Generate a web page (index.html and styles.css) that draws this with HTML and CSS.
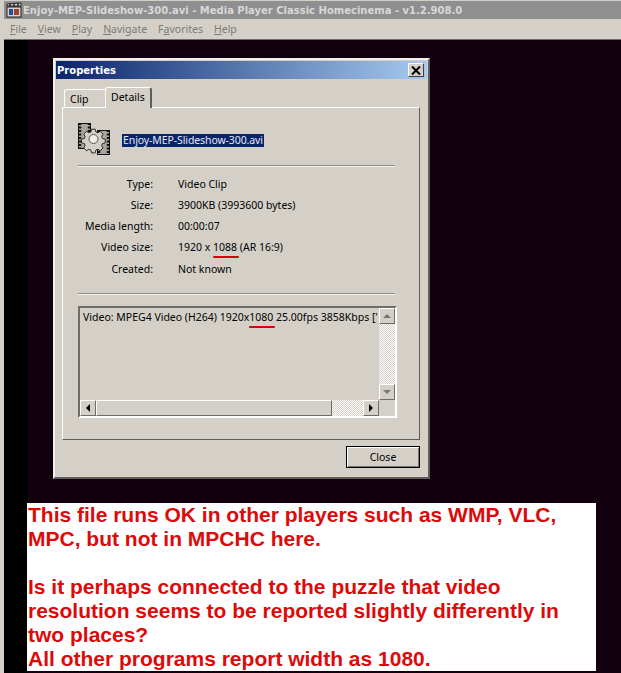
FILE: index.html
```html
<!DOCTYPE html>
<html lang="en">
<head>
    <meta charset="UTF-8">
    <title>Enjoy-MEP-Slideshow-300.avi - Media Player Classic Homecinema</title>
    <link rel="stylesheet" href="styles.css">
</head>
<body>
    <div class="player">
        <div class="titlebar">
            <svg class="app-icon" width="16" height="16" viewBox="0 0 16 16">
                <rect x="1" y="5" width="14" height="10" fill="#d8d4cc" stroke="#222"/>
                <path d="M1 2l14-1v3H1z" fill="#e8e4dc" stroke="#222"/>
                <path d="M4 1.500v3M8 1.500v3M12 1v3" stroke="#222" stroke-width="1.500"/>
                <rect x="3" y="7" width="4" height="6" fill="#2a4a9a"/>
                <rect x="8" y="7" width="5" height="6" fill="#a04030"/>
            </svg>
            <span>Enjoy-MEP-Slideshow-300.avi - Media Player Classic Homecinema - v1.2.908.0</span>
        </div>
        <div class="menubar">
            <span><u>F</u>ile</span>
            <span><u>V</u>iew</span>
            <span><u>P</u>lay</span>
            <span><u>N</u>avigate</span>
            <span>F<u>a</u>vorites</span>
            <span><u>H</u>elp</span>
        </div>
        <div class="video">
            <div class="dialog">
                <div class="dialog-title">
                    <span>Properties</span>
                    <button class="close-x" type="button">
                        <svg width="10" height="9" viewBox="0 0 10 9"><path d="M1 0.500l8 8M9 0.500l-8 8" stroke="#000" stroke-width="2"/></svg>
                    </button>
                </div>
                <div class="tabs">
                    <div class="tab">Clip</div>
                    <div class="tab active">Details</div>
                </div>
                <div class="pane">
                    <div class="file-head">
                        <svg class="file-icon" width="34" height="34" viewBox="0 0 34 34">
                            <g fill="#a9a69f" stroke="#111">
                                <rect x="1.500" y="1.500" width="12" height="25"/>
                                <rect x="20.500" y="8.500" width="12" height="24"/>
                            </g>
                            <path d="M3 1v26M12 1v26M22 8v25M31 8v25" stroke="#111" stroke-width="2.500" stroke-dasharray="2 1.500"/>
                            <path d="M14 3h5l1 4 3 1 3-2 4 4-2 3 1 3 4 1v5l-4 1-1 3 2 3-4 4-3-2-3 1-1 4h-5l-1-4-3-1-3 2-4-4 2-3-1-3-4-1v-5l4-1 1-3-2-3 4-4 3 2 3-1z" transform="translate(4.500 5) scale(.72)" fill="#d4d0c8" stroke="#222" stroke-width="1.300"/>
                            <circle cx="16.500" cy="17" r="4.500" fill="#efede8" stroke="#555"/>
                        </svg>
                        <span class="file-name">Enjoy-MEP-Slideshow-300.avi</span>
                    </div>
                    <div class="groove"></div>
                    <div class="info">
                        <span class="label">Type:</span><span>Video Clip</span>
                        <span class="label">Size:</span><span>3900KB (3993600 bytes)</span>
                        <span class="label">Media length:</span><span>00:00:07</span>
                        <span class="label">Video size:</span><span>1920 x <span class="mark">1088</span> (AR 16:9)</span>
                        <span class="label">Created:</span><span>Not known</span>
                    </div>
                    <div class="groove"></div>
                    <div class="listing">
                        <div class="listing-main">
                            <div class="listing-text">Video: MPEG4 Video (H264) 1920x<span class="mark">1080</span> 25.00fps 3858Kbps ['</div>
                            <div class="hscroll">
                                <div class="sb-btn"><i class="arrow left"></i></div>
                                <div class="sb-thumb"></div>
                                <div class="sb-track"></div>
                                <div class="sb-btn"><i class="arrow right"></i></div>
                            </div>
                        </div>
                        <div class="vscroll">
                            <div class="sb-btn"><i class="arrow up"></i></div>
                            <div class="sb-track"></div>
                            <div class="sb-btn"><i class="arrow down"></i></div>
                        </div>
                    </div>
                </div>
                <div class="dialog-foot">
                    <button class="close-btn" type="button">Close</button>
                </div>
            </div>
            <div class="note">
                <p>This file runs OK in other players such as WMP, VLC,<br>MPC, but not in MPCHC here.</p>
                <p>Is it perhaps connected to the puzzle that video<br>resolution seems to be reported slightly differently in<br>two places?<br>All other programs report width as 1080.</p>
            </div>
        </div>
    </div>
</body>
</html>
```

FILE: styles.css
```css
html, body {
    margin: 0;
    height: 100%;
    overflow: hidden;
}
body {
    font-family: "Noto Sans", sans-serif;
    font-size: 10.500px;
    color: #000;
    background: #d4d0c8;
}
.player {
    height: 673px;
    display: flex;
    flex-direction: column;
    padding: 1px 0 0 4px;
    box-sizing: border-box;
}
.titlebar {
    height: 18px;
    display: flex;
    align-items: center;
    gap: 1px;
    padding-left: 2px;
    background: #8f8f8f;
    color: #d8d8d8;
    font-family: "DejaVu Sans", sans-serif;
    font-weight: bold;
    font-size: 10px;
    white-space: nowrap;
}
.app-icon {
    flex: none;
}
.menubar {
    height: 20px;
    display: flex;
    align-items: center;
    gap: 11px;
    padding-left: 6px;
    color: #7d7b76;
}
.video {
    flex: 1;
    background: linear-gradient(to right, #000 24px, #12000f 24px);
    border-top: 1px solid #6f6e6a;
    padding: 18px 0 0 49px;
}
.dialog {
    width: 364px;
    height: 416px;
    background: #d4d0c8;
    border: 2px solid;
    border-color: #f2f0ec #5e5d59 #5e5d59 #f2f0ec;
    display: flex;
    flex-direction: column;
    padding: 1px 8px 0 1px;
}
.dialog-title {
    height: 18px;
    margin-right: -7px;
    display: flex;
    align-items: center;
    justify-content: space-between;
    padding: 0 3px 0 1px;
    background: linear-gradient(to right, #0a246a, #a6caf0);
    color: #fff;
    font-weight: bold;
    font-size: 10px;
    font-family: "DejaVu Sans", sans-serif;
}
.close-x {
    width: 16px;
    height: 14px;
    padding: 0;
    display: flex;
    align-items: center;
    justify-content: center;
    background: #d4d0c8;
    border: 1px solid;
    border-color: #fff #404040 #404040 #fff;
}
.tabs {
    display: flex;
    align-items: flex-end;
    height: 28px;
    padding-left: 8px;
}
.tab {
    width: 41px;
    height: 18px;
    padding-left: 5px;
    display: flex;
    align-items: center;
    background: #d4d0c8;
    border: 1px solid #fff;
    border-bottom: 0;
    border-right: 0;
    border-radius: 3px 0 0 0;
    box-sizing: border-box;
}
.tab.active {
    width: 47px;
    height: 21px;
    padding-bottom: 3px;
    margin-bottom: -1px;
    border-right: 2px solid #5e5d59;
    border-radius: 3px 3px 0 0;
    position: relative;
    z-index: 1;
}
.pane {
    margin-left: 6px;
    width: 358px;
    height: 333px;
    border: 1px solid;
    border-color: #fff #5e5d59 #5e5d59 #fff;
    box-sizing: border-box;
    padding: 12px 0 0 15px;
    display: flex;
    flex-direction: column;
}
.file-head {
    display: flex;
    align-items: center;
    gap: 11px;
    height: 38px;
    margin-left: -1px;
}
.file-icon {
    flex: none;
}
.file-name {
    background: #0a246a;
    color: #e8e8f0;
    padding: 0 1px;
    line-height: 13px;
    margin-top: 2px;
    letter-spacing: -0.100px;
}
.groove {
    width: 317px;
    height: 2px;
    background: #8f8e8a;
    border-bottom: 1px solid #f4f2ee;
    box-sizing: border-box;
    flex: none;
}
.file-head + .groove {
    margin-top: 7px;
}
.info {
    display: grid;
    grid-template-columns: 75px auto;
    column-gap: 25px;
    grid-auto-rows: 21.250px;
    align-items: center;
    justify-content: start;
    padding-top: 6px;
    height: 119px;
    box-sizing: border-box;
    margin-bottom: 7px;
}
.label {
    text-align: right;
}
.mark {
    position: relative;
}
.mark::after {
    content: "";
    position: absolute;
    left: 0;
    right: -2px;
    bottom: -4px;
    height: 2px;
    background: #d8000c;
    border-radius: 1px;
}
.listing {
    margin-top: 11px;
    width: 319px;
    height: 112px;
    box-sizing: border-box;
    border: 2px solid;
    border-color: #6d6c68 #fff #fff #6d6c68;
    display: flex;
}
.listing-main {
    flex: 1;
    display: flex;
    flex-direction: column;
    min-width: 0;
}
.listing-text {
    flex: 1;
    padding: 2px 0 0 3px;
    white-space: nowrap;
}
.hscroll {
    height: 16px;
    display: flex;
}
.vscroll {
    width: 16px;
    display: flex;
    flex-direction: column;
    padding-bottom: 16px;
}
.sb-btn {
    width: 16px;
    height: 16px;
    flex: none;
    display: flex;
    align-items: center;
    justify-content: center;
    background: #d4d0c8;
    border: 1px solid;
    border-color: #fff #6d6c68 #6d6c68 #fff;
    box-sizing: border-box;
}
.sb-thumb {
    width: 236px;
    border: 1px solid;
    border-color: #fff #6d6c68 #6d6c68 #fff;
    box-sizing: border-box;
}
.sb-track {
    flex: 1;
    background: repeating-conic-gradient(#d4d0c8 0 25%, #fff 0 50%) 0 0 / 2px 2px;
}
.arrow {
    width: 0;
    height: 0;
    border: 4px solid transparent;
}
.arrow.left {
    border-left: 0;
    border-right-color: #000;
}
.arrow.right {
    border-right: 0;
    border-left-color: #000;
}
.arrow.up {
    border-top: 0;
    border-bottom-color: #77766f;
}
.arrow.down {
    border-bottom: 0;
    border-top-color: #77766f;
}
.dialog-foot {
    display: flex;
    justify-content: flex-end;
    padding-top: 6px;
}
.close-btn {
    width: 74px;
    height: 22px;
    padding: 0;
    background: #d4d0c8;
    border: 1px solid #000;
    box-shadow: inset 1px 1px 0 #fff, inset -1px -1px 0 #77766f;
    font: inherit;
}
.note {
    margin: 24px 0 0 -26px;
    width: 569px;
    height: 168px;
    background: #fff;
    color: #dc0a0a;
    font-family: "Liberation Sans", sans-serif;
    font-weight: bold;
    font-size: 21px;
    line-height: 24px;
    padding-left: 1px;
    box-sizing: border-box;
}
.note p {
    margin: 0 0 24px;
}
```
